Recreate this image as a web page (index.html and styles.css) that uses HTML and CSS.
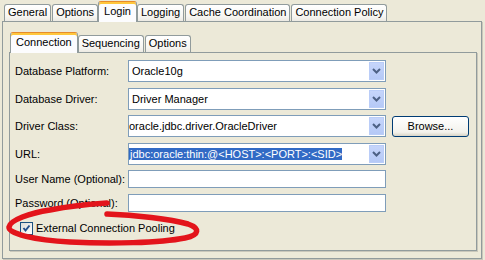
FILE: index.html
```html
<!DOCTYPE html>
<html lang="en">
<head>
    <meta charset="UTF-8">
    <title>Login - Connection</title>
    <link rel="stylesheet" href="styles.css">
</head>
<body>
    <div class="tabs outer-tabs">
        <div class="tab">General</div>
        <div class="tab">Options</div>
        <div class="tab active">Login</div>
        <div class="tab">Logging</div>
        <div class="tab">Cache Coordination</div>
        <div class="tab">Connection Policy</div>
    </div>

    <div class="pane outer-pane">
        <div class="tabs inner-tabs">
            <div class="tab active">Connection</div>
            <div class="tab">Sequencing</div>
            <div class="tab">Options</div>
        </div>

        <div class="pane inner-pane">
            <div class="form-grid">
                <label>Database Platform:</label>
                <div class="combo">
                    <span class="combo-value">Oracle10g</span>
                    <span class="combo-btn"><svg width="9" height="6" viewBox="0 0 9 6"><polyline points="1,1 4.5,4.5 8,1" fill="none" stroke="#4d6185" stroke-width="2"/></svg></span>
                </div>
                <div></div>

                <label>Database Driver:</label>
                <div class="combo">
                    <span class="combo-value">Driver Manager</span>
                    <span class="combo-btn"><svg width="9" height="6" viewBox="0 0 9 6"><polyline points="1,1 4.5,4.5 8,1" fill="none" stroke="#4d6185" stroke-width="2"/></svg></span>
                </div>
                <div></div>

                <label>Driver Class:</label>
                <div class="combo editable">
                    <span class="combo-value">oracle.jdbc.driver.OracleDriver</span>
                    <span class="combo-btn"><svg width="9" height="6" viewBox="0 0 9 6"><polyline points="1,1 4.5,4.5 8,1" fill="none" stroke="#4d6185" stroke-width="2"/></svg></span>
                </div>
                <button class="btn">Browse...</button>

                <label>URL:</label>
                <div class="combo editable">
                    <span class="combo-value"><span class="selected">jdbc:oracle:thin:@&lt;HOST&gt;:&lt;PORT&gt;:&lt;SID&gt;</span></span>
                    <span class="combo-btn"><svg width="9" height="6" viewBox="0 0 9 6"><polyline points="1,1 4.5,4.5 8,1" fill="none" stroke="#4d6185" stroke-width="2"/></svg></span>
                </div>
                <div></div>

                <label>User Name (Optional):</label>
                <div class="text-field"></div>
                <div></div>

                <label>Password (Optional):</label>
                <div class="text-field"></div>
                <div></div>
            </div>

            <label class="check-row">
                <span class="checkbox"><svg width="11" height="11" viewBox="0 0 11 11"><polyline points="2.5,5 4.5,7.5 8.5,2.5" fill="none" stroke="#24508c" stroke-width="2"/></svg></span>
                External Connection Pooling
            </label>
        </div>
    </div>

    <!-- hand drawn highlight -->
    <svg class="marker" width="485" height="260" viewBox="0 0 485 260">
        <path d="M107,214 C135,215 170,219 188,224 C200,228 200,235 185,238 C160,243 110,244 70,242 C35,240 8,234 9,227 C10,220 30,213 50,210 C70,206 90,204 107,203"
              fill="none" stroke="#e3141b" stroke-width="5.5" stroke-linecap="round"/>
    </svg>
</body>
</html>
```

FILE: styles.css
```css
* {
    margin: 0;
    padding: 0;
    box-sizing: border-box;
}

body {
    font-family: 'Liberation Sans', Arial, sans-serif;
    font-size: 11px;
    color: #000;
    background: #ece9d8;
    width: 485px;
    height: 260px;
    overflow: hidden;
}

/* tabs */

.tabs {
    display: flex;
    align-items: flex-end;
    gap: 1px;
    height: 21px;
}

.outer-tabs {
    padding-left: 4px;
}

.tab {
    height: 17px;
    line-height: 15px;
    padding: 0 3px;
    border: 1px solid #919b9c;
    border-bottom: none;
    border-radius: 3px 3px 0 0;
    background: linear-gradient(#ffffff, #f7f6f2 70%, #eceae3);
    white-space: nowrap;
}

.tab.active {
    position: relative;
    z-index: 1;
    height: 21px;
    line-height: 19px;
    margin: 0 -1px -1px;
    padding: 0 5px;
    border-top: 1px solid #e68b2c;
    box-shadow: inset 0 2px 0 #ffc73c;
    background: #fcfcfe;
}

.pane {
    border: 1px solid #919b9c;
    box-shadow: 1px 1px 0 #c9c7ba;
}

.outer-pane {
    margin-left: 2px;
    width: 480px;
    height: 238px;
    padding: 9px 4px 0 6px;
}

.inner-tabs {
    padding-left: 2px;
}

.inner-pane {
    height: 199px;
    padding: 7px 0 0 5px;
}

/* form */

.form-grid {
    display: grid;
    grid-template-columns: 113px 258px 83px;
    grid-template-rows: 22px 22px 22px 22px 18px 18px;
    row-gap: 5.5px;
    align-items: center;
}

.combo,
.text-field {
    height: 100%;
    border: 1px solid #7f9db9;
    background: #fff;
    display: flex;
    align-items: center;
}

.combo-value {
    flex: 1;
    padding-left: 3px;
    white-space: nowrap;
    overflow: hidden;
}

.combo.editable .combo-value {
    padding-left: 0;
}

.selected {
    background: #316ac5;
    color: #fff;
    padding: 2px 0 2px 1px;
}

.combo-btn {
    width: 17px;
    height: 100%;
    border: 1px solid #fff;
    background: linear-gradient(#c7d6fb, #b4c8f6);
    box-shadow: inset 0 0 0 1px #bacdf8;
    display: flex;
    align-items: center;
    justify-content: center;
}

.btn {
    margin-left: 6px;
    width: 77px;
    height: 21px;
    font: inherit;
    border: 1px solid #003c74;
    border-radius: 3px;
    background: linear-gradient(#ffffff, #f3f2ec 80%, #d8d4c6);
}

.check-row {
    display: flex;
    align-items: center;
    gap: 3px;
    margin: 10px 0 0 5px;
}

.checkbox {
    width: 13px;
    height: 13px;
    border: 1px solid #1c5180;
    background: linear-gradient(135deg, #dcdcd7, #ffffff);
    display: flex;
}

.marker {
    position: absolute;
    left: 0;
    top: 0;
    pointer-events: none;
}
```
